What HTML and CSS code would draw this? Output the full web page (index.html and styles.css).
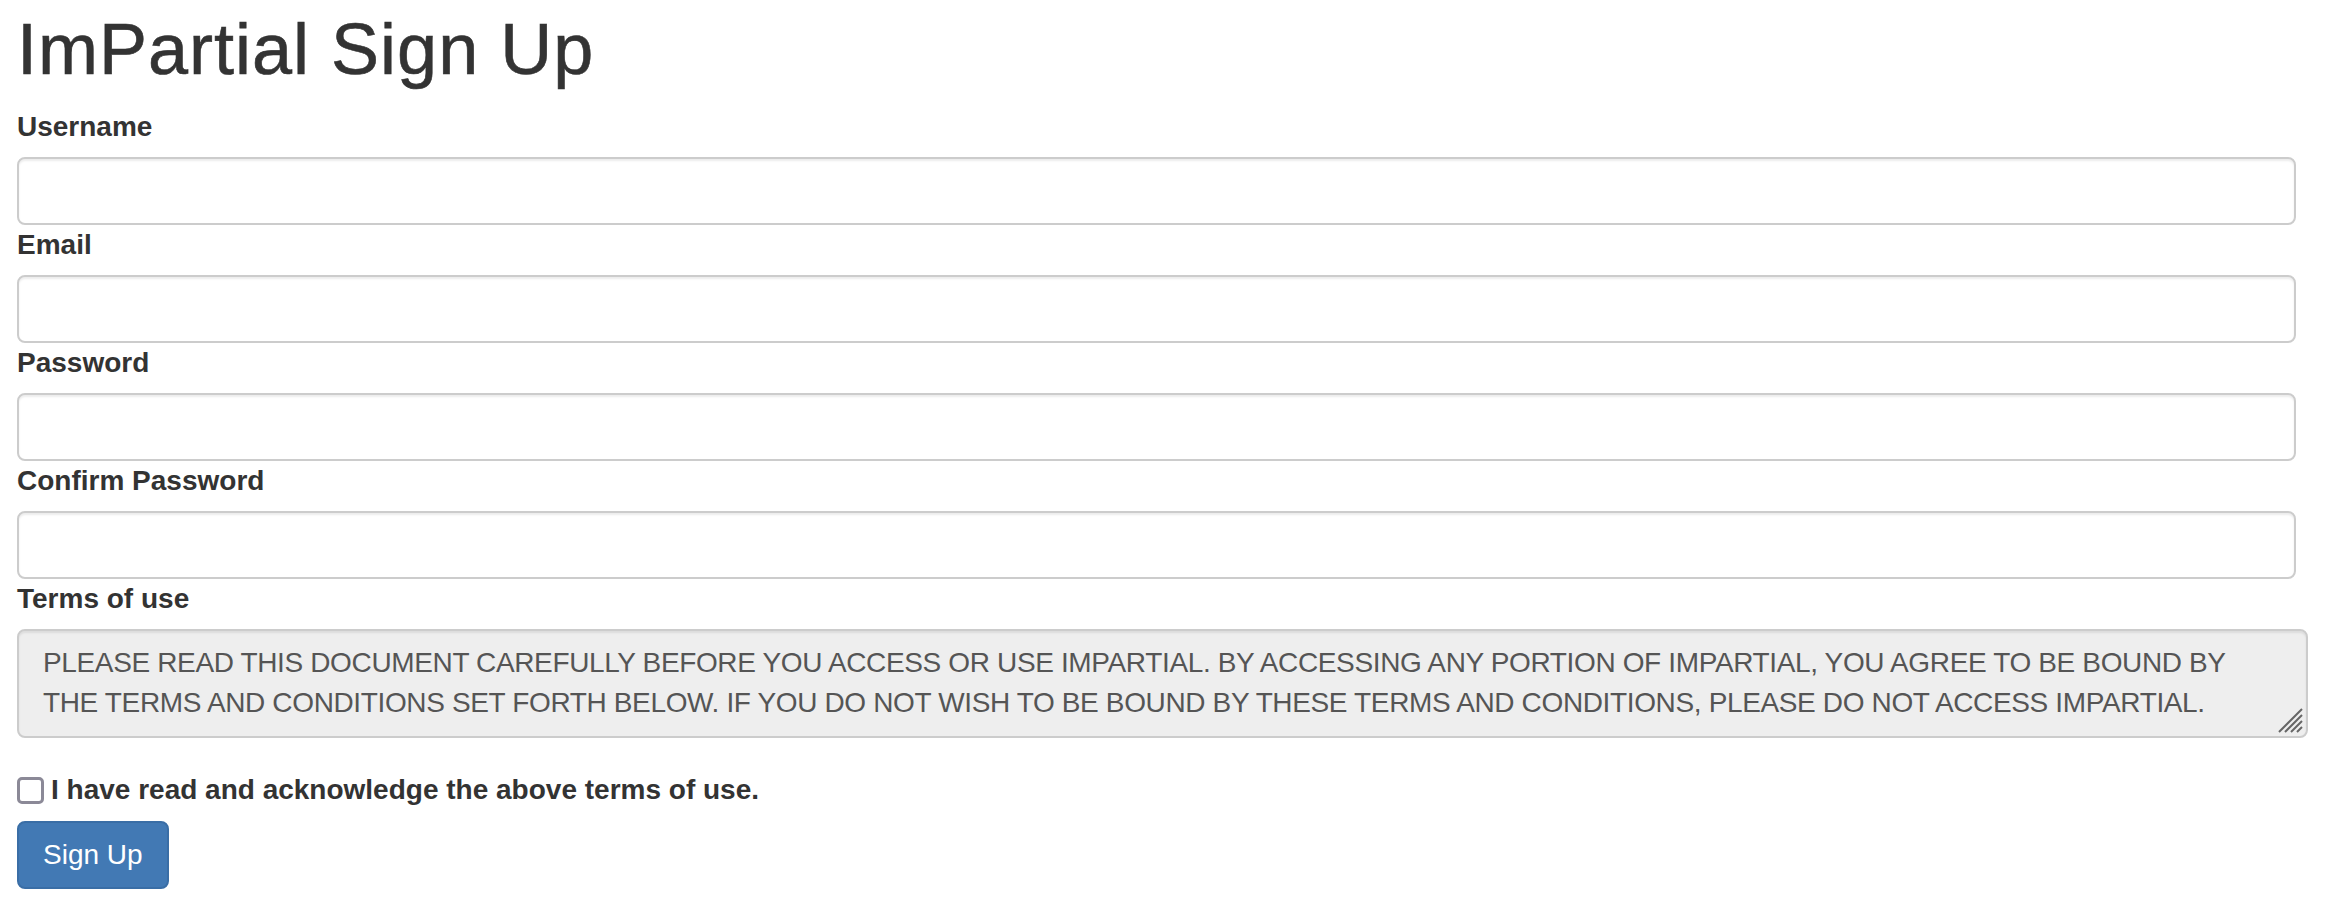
FILE: index.html
```html
<!DOCTYPE html>
<html lang="en">
<head>
<meta charset="utf-8">
<title>ImPartial Sign Up</title>
<link rel="stylesheet" href="styles.css">
</head>
<body>
<main class="page">
  <h1 class="title">ImPartial Sign Up</h1>
  <form class="signup">
    <div class="field">
      <label class="field-label" for="username">Username</label>
      <input class="control" id="username" type="text">
    </div>
    <div class="field">
      <label class="field-label" for="email">Email</label>
      <input class="control" id="email" type="email">
    </div>
    <div class="field">
      <label class="field-label" for="password">Password</label>
      <input class="control" id="password" type="password">
    </div>
    <div class="field">
      <label class="field-label" for="confirm">Confirm Password</label>
      <input class="control" id="confirm" type="password">
    </div>
    <div class="field">
      <span class="field-label">Terms of use</span>
      <div class="terms">
        <span class="terms-line">PLEASE READ THIS DOCUMENT CAREFULLY BEFORE YOU ACCESS OR USE IMPARTIAL. BY ACCESSING ANY PORTION OF IMPARTIAL, YOU AGREE TO BE BOUND BY</span>
        <span class="terms-line">THE TERMS AND CONDITIONS SET FORTH BELOW. IF YOU DO NOT WISH TO BE BOUND BY THESE TERMS AND CONDITIONS, PLEASE DO NOT ACCESS IMPARTIAL.</span>
        <svg class="grip" width="26" height="26" viewBox="0 0 26 26" aria-hidden="true">
          <path d="M25 2 L2 25 M25 8 L8 25 M25 14 L14 25 M25 20 L20 25" stroke="#666" stroke-width="2" fill="none"/>
        </svg>
      </div>
    </div>
    <label class="agree">
      <input class="check" type="checkbox">
      <span>I have read and acknowledge the above terms of use.</span>
    </label>
    <button class="btn" type="button">Sign Up</button>
  </form>
</main>
</body>
</html>
```

FILE: styles.css
```css
* { box-sizing: border-box; }

html, body {
  margin: 0;
  padding: 0;
  background: #fff;
}

body {
  font-family: "Liberation Sans", Arial, Helvetica, sans-serif;
  font-size: 28px;
  line-height: 40px;
  color: #333;
}

.page {
  padding: 10px 22px 0 17px;
}

.title {
  margin: 0 0 18px 0;
  font-size: 72px;
  line-height: 79px;
  font-weight: 500;
  letter-spacing: 1px;
  -webkit-text-stroke: 0.6px #333;
  color: #333;
}

.signup {
  display: flex;
  flex-direction: column;
  align-items: flex-start;
}

.field {
  display: flex;
  flex-direction: column;
  width: 100%;
}

.field-label {
  display: block;
  font-weight: bold;
  line-height: 40px;
  margin-bottom: 10px;
}

.control {
  display: block;
  width: calc(100% - 12px);
  height: 68px;
  margin: 0;
  padding: 12px 24px;
  font: inherit;
  color: #555;
  background: #fff;
  border: 2px solid #ccc;
  border-radius: 8px;
  box-shadow: inset 0 2px 2px rgba(0, 0, 0, 0.075);
  outline: none;
}

.terms {
  position: relative;
  width: 100%;
  height: 109px;
  padding: 12px 24px;
  color: #555;
  background: #eee;
  border: 2px solid #ccc;
  border-radius: 8px;
  box-shadow: inset 0 2px 2px rgba(0, 0, 0, 0.075);
  letter-spacing: -0.36px;
}

.terms-line {
  display: block;
  white-space: nowrap;
}

.grip {
  position: absolute;
  right: 3px;
  bottom: 3px;
}

.agree {
  display: flex;
  align-items: center;
  gap: 7px;
  margin-top: 32px;
  height: 40px;
  font-weight: bold;
  cursor: pointer;
}

.check {
  appearance: none;
  -webkit-appearance: none;
  flex: none;
  width: 27px;
  height: 27px;
  margin: 0;
  background: #fff;
  border: 3px solid #8b8997;
  border-radius: 5px;
}

.btn {
  margin-top: 11px;
  height: 68px;
  padding: 12px 24px;
  font: inherit;
  line-height: 40px;
  color: #fff;
  background: #4279b4;
  border: 2px solid #3a6ea6;
  border-radius: 8px;
  cursor: pointer;
}
```
